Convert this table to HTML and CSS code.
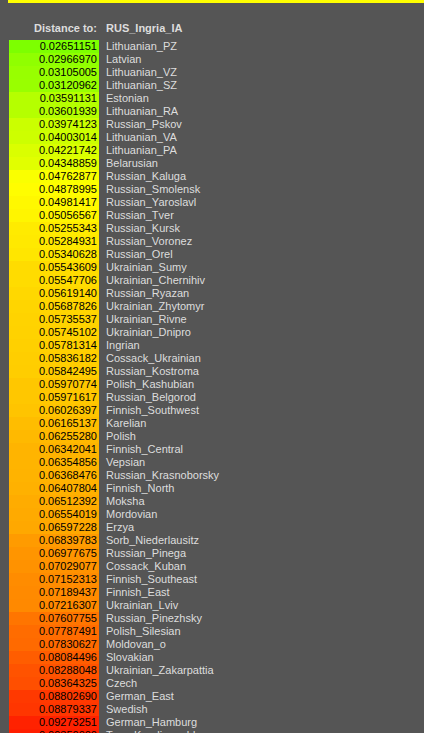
FILE: index.html
```html
<!DOCTYPE html>
<html lang="en">
<head>
<meta charset="utf-8">
<title>Distance to: RUS_Ingria_IA</title>
<link rel="stylesheet" href="styles.css">
</head>
<body>
<div class="topbar"></div>
<table class="dist">
<thead>
<tr><th class="lbl">Distance to:</th><th class="tgt">RUS_Ingria_IA</th></tr>
</thead>
<tbody>
<tr><td class="val" style="background:#7dff00">0.02651151</td><td class="name">Lithuanian_PZ</td></tr>
<tr><td class="val" style="background:#90ff00">0.02966970</td><td class="name">Latvian</td></tr>
<tr><td class="val" style="background:#98ff00">0.03105005</td><td class="name">Lithuanian_VZ</td></tr>
<tr><td class="val" style="background:#99ff00">0.03120962</td><td class="name">Lithuanian_SZ</td></tr>
<tr><td class="val" style="background:#b5ff00">0.03591131</td><td class="name">Estonian</td></tr>
<tr><td class="val" style="background:#b5ff00">0.03601939</td><td class="name">Lithuanian_RA</td></tr>
<tr><td class="val" style="background:#cbff00">0.03974123</td><td class="name">Russian_Pskov</td></tr>
<tr><td class="val" style="background:#cdff00">0.04003014</td><td class="name">Lithuanian_VA</td></tr>
<tr><td class="val" style="background:#daff00">0.04221742</td><td class="name">Lithuanian_PA</td></tr>
<tr><td class="val" style="background:#e1ff00">0.04348859</td><td class="name">Belarusian</td></tr>
<tr><td class="val" style="background:#faff00">0.04762877</td><td class="name">Russian_Kaluga</td></tr>
<tr><td class="val" style="background:#fffd00">0.04878995</td><td class="name">Russian_Smolensk</td></tr>
<tr><td class="val" style="background:#fff800">0.04981417</td><td class="name">Russian_Yaroslavl</td></tr>
<tr><td class="val" style="background:#fff500">0.05056567</td><td class="name">Russian_Tver</td></tr>
<tr><td class="val" style="background:#ffeb00">0.05255343</td><td class="name">Russian_Kursk</td></tr>
<tr><td class="val" style="background:#ffe900">0.05284931</td><td class="name">Russian_Voronez</td></tr>
<tr><td class="val" style="background:#ffe600">0.05340628</td><td class="name">Russian_Orel</td></tr>
<tr><td class="val" style="background:#ffdc00">0.05543609</td><td class="name">Ukrainian_Sumy</td></tr>
<tr><td class="val" style="background:#ffdc00">0.05547706</td><td class="name">Ukrainian_Chernihiv</td></tr>
<tr><td class="val" style="background:#ffd800">0.05619140</td><td class="name">Russian_Ryazan</td></tr>
<tr><td class="val" style="background:#ffd500">0.05687826</td><td class="name">Ukrainian_Zhytomyr</td></tr>
<tr><td class="val" style="background:#ffd300">0.05735537</td><td class="name">Ukrainian_Rivne</td></tr>
<tr><td class="val" style="background:#ffd200">0.05745102</td><td class="name">Ukrainian_Dnipro</td></tr>
<tr><td class="val" style="background:#ffd000">0.05781314</td><td class="name">Ingrian</td></tr>
<tr><td class="val" style="background:#ffce00">0.05836182</td><td class="name">Cossack_Ukrainian</td></tr>
<tr><td class="val" style="background:#ffcd00">0.05842495</td><td class="name">Russian_Kostroma</td></tr>
<tr><td class="val" style="background:#ffc700">0.05970774</td><td class="name">Polish_Kashubian</td></tr>
<tr><td class="val" style="background:#ffc700">0.05971617</td><td class="name">Russian_Belgorod</td></tr>
<tr><td class="val" style="background:#ffc400">0.06026397</td><td class="name">Finnish_Southwest</td></tr>
<tr><td class="val" style="background:#ffbd00">0.06165137</td><td class="name">Karelian</td></tr>
<tr><td class="val" style="background:#ffb900">0.06255280</td><td class="name">Polish</td></tr>
<tr><td class="val" style="background:#ffb400">0.06342041</td><td class="name">Finnish_Central</td></tr>
<tr><td class="val" style="background:#ffb400">0.06354856</td><td class="name">Vepsian</td></tr>
<tr><td class="val" style="background:#ffb300">0.06368476</td><td class="name">Russian_Krasnoborsky</td></tr>
<tr><td class="val" style="background:#ffb100">0.06407804</td><td class="name">Finnish_North</td></tr>
<tr><td class="val" style="background:#ffac00">0.06512392</td><td class="name">Moksha</td></tr>
<tr><td class="val" style="background:#ffaa00">0.06554019</td><td class="name">Mordovian</td></tr>
<tr><td class="val" style="background:#ffa800">0.06597228</td><td class="name">Erzya</td></tr>
<tr><td class="val" style="background:#ff9b00">0.06839783</td><td class="name">Sorb_Niederlausitz</td></tr>
<tr><td class="val" style="background:#ff9500">0.06977675</td><td class="name">Russian_Pinega</td></tr>
<tr><td class="val" style="background:#ff9200">0.07029077</td><td class="name">Cossack_Kuban</td></tr>
<tr><td class="val" style="background:#ff8c00">0.07152313</td><td class="name">Finnish_Southeast</td></tr>
<tr><td class="val" style="background:#ff8a00">0.07189437</td><td class="name">Finnish_East</td></tr>
<tr><td class="val" style="background:#ff8900">0.07216307</td><td class="name">Ukrainian_Lviv</td></tr>
<tr><td class="val" style="background:#ff7500">0.07607755</td><td class="name">Russian_Pinezhsky</td></tr>
<tr><td class="val" style="background:#ff6c00">0.07787491</td><td class="name">Polish_Silesian</td></tr>
<tr><td class="val" style="background:#ff6a00">0.07830627</td><td class="name">Moldovan_o</td></tr>
<tr><td class="val" style="background:#ff5d00">0.08084496</td><td class="name">Slovakian</td></tr>
<tr><td class="val" style="background:#ff5300">0.08288048</td><td class="name">Ukrainian_Zakarpattia</td></tr>
<tr><td class="val" style="background:#ff4f00">0.08364325</td><td class="name">Czech</td></tr>
<tr><td class="val" style="background:#ff3900">0.08802690</td><td class="name">German_East</td></tr>
<tr><td class="val" style="background:#ff3600">0.08879337</td><td class="name">Swedish</td></tr>
<tr><td class="val" style="background:#ff2200">0.09273251</td><td class="name">German_Hamburg</td></tr>
<tr><td class="val" style="background:#ff1e00">0.09350000</td><td class="name">Tver_Karelian_old</td></tr>
</tbody>
</table>
</body>
</html>
```
FILE: styles.css
```css
html {
  overflow: hidden;
}

body {
  margin: 0;
  background: #555555;
  font-family: "Liberation Sans", Arial, sans-serif;
  font-size: 11px;
  color: #dddddd;
}

.topbar {
  height: 3px;
  margin-left: 8px;
  background: #ffff00;
}

.dist {
  margin: 19px 0 0 9px;
  border-collapse: collapse;
  border-spacing: 0;
}

.dist th {
  font-weight: bold;
  line-height: 13px;
  padding: 0 0 5px 0;
  white-space: nowrap;
  color: #dddddd;
}

.dist th.lbl {
  text-align: right;
  padding-right: 2px;
}

.dist th.tgt {
  text-align: left;
  padding-left: 7px;
}

.dist td {
  line-height: 13px;
  height: 13px;
  padding: 0;
  white-space: nowrap;
}

.dist td.val {
  width: 88px;
  padding-right: 2px;
  text-align: right;
  color: #000000;
}

.dist td.name {
  padding-left: 7px;
  color: #dddddd;
}
```
